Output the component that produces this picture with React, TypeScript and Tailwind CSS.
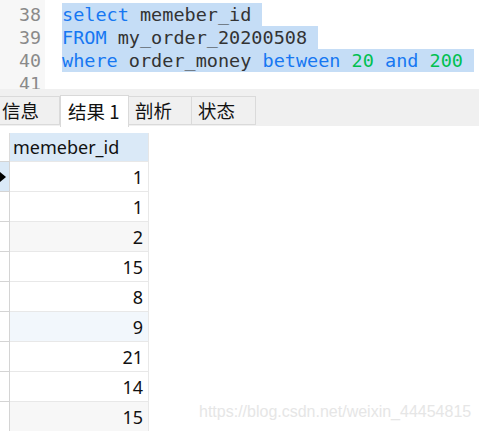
import React from 'react';

const codeLines: { n: number; parts: { t: string; c: string }[]; sel: boolean }[] = [
    { n: 38, sel: true, parts: [{ t: 'select', c: 'text-[#1677f2]' }, { t: ' memeber_id ', c: 'text-[#333333]' }] },
    { n: 39, sel: true, parts: [{ t: 'FROM', c: 'text-[#1677f2]' }, { t: ' my_order_20200508 ', c: 'text-[#333333]' }] },
    {
        n: 40,
        sel: true,
        parts: [
            { t: 'where', c: 'text-[#1677f2]' },
            { t: ' order_money ', c: 'text-[#333333]' },
            { t: 'between', c: 'text-[#1677f2]' },
            { t: ' ', c: '' },
            { t: '20', c: 'text-[#00c050]' },
            { t: ' ', c: '' },
            { t: 'and', c: 'text-[#1677f2]' },
            { t: ' ', c: '' },
            { t: '200', c: 'text-[#00c050]' },
            { t: ' ', c: '' },
        ],
    },
    { n: 41, sel: false, parts: [] },
];

const rows = [
    { v: '1', bg: 'bg-white', cur: true },
    { v: '1', bg: 'bg-white' },
    { v: '2', bg: 'bg-[#f7f7f7]' },
    { v: '15', bg: 'bg-white' },
    { v: '8', bg: 'bg-white' },
    { v: '9', bg: 'bg-[#f2f7fc]' },
    { v: '21', bg: 'bg-white' },
    { v: '14', bg: 'bg-white' },
    { v: '15', bg: 'bg-[#f7f7f7]' },
];

const tabs = [
    { label: '信息', w: 'w-[60px]', active: false },
    { label: '结果 1', w: 'w-[69px]', active: true },
    { label: '剖析', w: 'w-[64px]', active: false },
    { label: '状态', w: 'w-[65px]', active: false },
];

const App: React.FC = () => {
    return (
        <div className="relative w-[479px] h-[432px] overflow-hidden bg-white">
            {/* editor */}
            <div className="flex h-[89px] overflow-hidden">
                <div className="w-[45px] bg-[#f7f7f7] pt-[3px] font-['DejaVu_Sans_Mono',monospace] text-[18.3px] text-[#8a8a8a]">
                    {codeLines.map(l => (
                        <div key={l.n} className="h-[23px] leading-[23px] text-right pr-[4px]">{l.n}</div>
                    ))}
                </div>
                <div className="flex-1 pt-[3px] pl-[17px] font-['DejaVu_Sans_Mono',monospace] text-[18.5px]">
                    {codeLines.map(l => (
                        <div key={l.n} className="h-[23px] leading-[23px] whitespace-pre">
                            <span className={l.sel ? 'bg-[#c5ddf6] inline-block h-[23px]' : ''}>
                                {l.parts.map((p, i) => (
                                    <span key={i} className={p.c}>{p.t}</span>
                                ))}
                            </span>
                        </div>
                    ))}
                </div>
            </div>

            {/* tab bar */}
            <div className="flex items-end h-[37px] bg-[#f0f0f0] font-['Noto_Sans_CJK_SC','Liberation_Sans',sans-serif] text-[18.5px] text-[#111]">
                {tabs.map(t =>
                    t.active ? (
                        <div
                            key={t.label}
                            className={`${t.w} h-[32px] -mb-[1px] bg-white border border-b-0 border-[#d9d9d9] flex items-center pl-[7px] leading-none`}
                        >
                            {t.label}
                        </div>
                    ) : (
                        <div
                            key={t.label}
                            className={`${t.w} h-[29px] mb-[1px] bg-[#f0f0f0] border border-[#dadada] -ml-[1px] flex items-center pl-[6px] leading-none first:ml-0 first:border-l-0 first:pl-[2px]`}
                        >
                            {t.label}
                        </div>
                    )
                )}
            </div>

            {/* grid */}
            <div className="pt-[7px] font-['Noto_Sans','Liberation_Sans',sans-serif] text-[18px] text-[#111]">
                <div className="flex">
                    <div className="w-[10px] h-[28px] border-r border-[#dcdcdc]" />
                    <div className="w-[139px] h-[28px] bg-[#dae9f7] border-r border-[#e6e6e6] flex items-center pl-[3px] leading-none">
                        memeber_id
                    </div>
                </div>
                {rows.map((r, i) => (
                    <div key={i} className="flex">
                        <div
                            className={`w-[10px] h-[30px] border-r border-t border-[#d4d4d4] flex items-center ${r.cur ? 'bg-[#dae9f7]' : 'bg-white'}`}
                        >
                            {r.cur && (
                                <svg width="6" height="10" viewBox="0 0 6 10">
                                    <path d="M0 0 L6 5 L0 10 Z" fill="#000" />
                                </svg>
                            )}
                        </div>
                        <div
                            className={`w-[139px] h-[30px] border-t border-r border-[#e8e8e8] ${r.bg} flex items-center justify-end pr-[5px] leading-none`}
                        >
                            {r.v}
                        </div>
                    </div>
                ))}
            </div>

            {/* watermark */}
            <div className="absolute left-[199px] top-[404px] font-['Liberation_Sans',sans-serif] text-[16px] text-[#e6e6e6] leading-none">
                https://blog.csdn.net/weixin_44454815
            </div>
        </div>
    );
};

export default App;
